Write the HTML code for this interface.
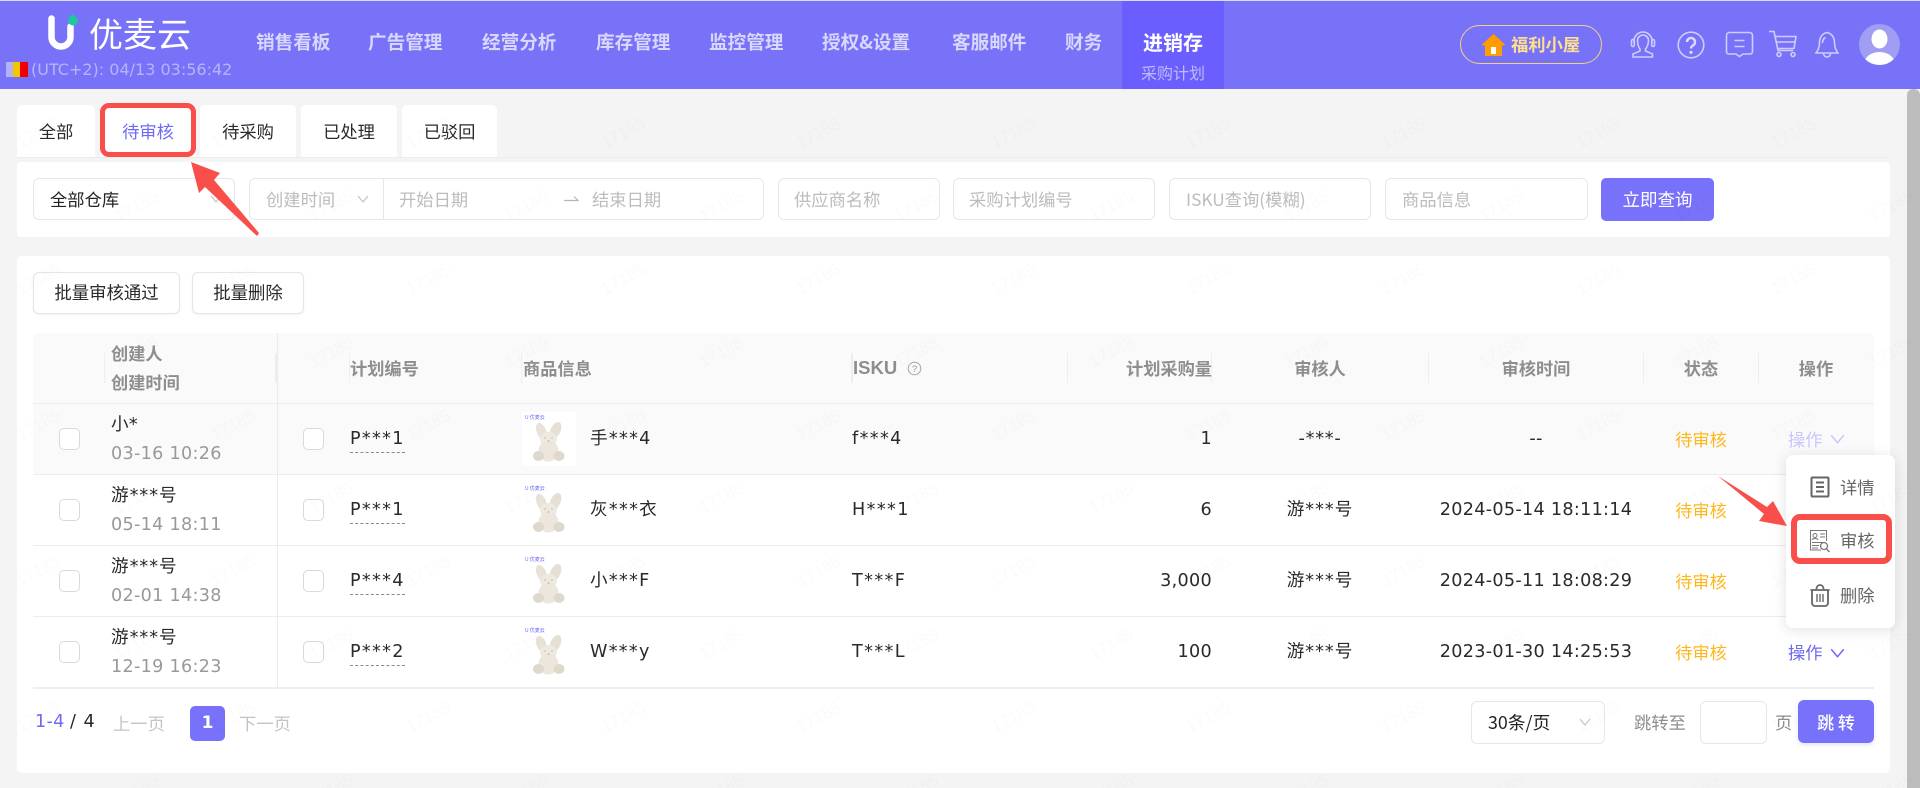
<!DOCTYPE html>
<html lang="zh"><head><meta charset="utf-8"><title>采购计划</title>
<style>
*{box-sizing:border-box}
html,body{margin:0;padding:0;width:1920px;height:788px;overflow:hidden;background:#f4f4f4;font-family:"DejaVu Sans","Noto Sans CJK SC",sans-serif;color:#2a2a2a}
.a{position:absolute}
.t{position:absolute;white-space:nowrap;line-height:24px;height:24px;font-size:17.600px;letter-spacing:.3px}
.c{font-family:"Noto Sans CJK SC",sans-serif;letter-spacing:0;font-size:17.300px}
.r{transform:translateX(-100%)}
.m{transform:translateX(-50%)}
.n{font-family:"Noto Sans CJK SC",sans-serif;font-weight:700;font-size:18.600px;color:#d9d7fc;letter-spacing:0;top:30px}
.tab{position:absolute;top:105px;height:52px;background:#fff;border-radius:5px 5px 0 0;text-align:center;font:17.300px/52px "Noto Sans CJK SC",sans-serif}
.box{position:absolute;background:#fff;border:1px solid #e7e7e7;border-radius:6px;height:42px;top:178px}
.ph{color:#bcbcbc;font-family:"Noto Sans CJK SC",sans-serif;letter-spacing:0;top:187px;font-size:17.300px}
.h{color:#8e8e8e;font-weight:700;font-family:"Noto Sans CJK SC",sans-serif;letter-spacing:0;font-size:17.200px}
.sep{position:absolute;top:353px;height:30px;width:1px;background:#eeeeee}
.line{position:absolute;left:33px;width:1841px;height:1px;background:#ededed}
.cb{position:absolute;background:#fff;border:1px solid #d9d9d9;border-radius:5px;width:21px;height:22px}
.u{position:absolute;left:350px;width:55px;height:0;border-top:1px dashed #8a8a8a}
.st{color:#fdb71e;font-family:"Noto Sans CJK SC",sans-serif;letter-spacing:0;font-size:17.300px}
.g{color:#999}
.btn{position:absolute;background:#fff;border:1px solid #e5e5e5;border-radius:6px;text-align:center;font:17.400px/40px "Noto Sans CJK SC",sans-serif;color:#2a2a2a;box-shadow:0 1px 2px rgba(0,0,0,.05)}
.rb{position:absolute;border:5px solid #f84f4a;border-radius:9px;background:transparent}
</style></head><body>

<svg width="0" height="0" style="position:absolute"><defs>
<symbol id="bun" viewBox="0 0 54 54">
<text x="3" y="7" font-size="5" fill="#6a64f5" font-family="Noto Sans CJK SC,sans-serif">U 优麦云</text>
<ellipse cx="19.500" cy="19.500" rx="4.800" ry="9" fill="#e8e2d8" transform="rotate(-22 19.500 19.500)"/>
<ellipse cx="33.500" cy="18.500" rx="5" ry="9" fill="#e5dfd4" transform="rotate(24 33.500 18.500)"/>
<ellipse cx="26.500" cy="27" rx="8.500" ry="7" fill="#eee9e1"/>
<ellipse cx="26.500" cy="39" rx="10" ry="10.500" fill="#ece6dc"/>
<ellipse cx="16.500" cy="44" rx="5.500" ry="5" fill="#dfd9cd"/>
<ellipse cx="37" cy="44" rx="5.500" ry="5" fill="#dfd9cd"/>
<circle cx="26.500" cy="29" r=".8" fill="#d59a94"/>
<circle cx="23" cy="26" r=".6" fill="#a89c8c"/><circle cx="30" cy="26" r=".6" fill="#a89c8c"/>
</symbol>
<symbol id="chev" viewBox="0 0 12 8"><path d="M1 1l5 6 5-6" fill="none" stroke="currentColor" stroke-width="1.200"/></symbol>
</defs></svg>

<!-- header -->
<div class="a" style="left:0;top:0;width:1920px;height:89px;background:#7772f8;border-top:1px solid #dcdbfb"></div>
<div class="a" style="left:1122px;top:1px;width:102px;height:88px;background:#6a5efe"></div>
<svg class="a" style="left:46px;top:14px" width="34" height="38" viewBox="0 0 34 38"><path d="M5.500 4.500V23a9.500 9.500 0 0 0 19 0V12.500" fill="none" stroke="#fff" stroke-width="6.500" stroke-linecap="round"/><path d="M26.500 0c4 3.500 5.500 5 5.500 6.500a5 5 0 0 1-10 0c0-1.500 1-3 4.500-6.500z" fill="#1fc79f"/></svg>
<div class="t c" style="left:89px;top:14px;height:38px;line-height:38px;font-size:34px;color:#fff">优麦云</div>
<div class="a" style="left:6px;top:62px;width:8px;height:15px;background:#b3b0fc"></div>
<div class="a" style="left:13px;top:62px;width:7px;height:15px;background:#f7c500"></div>
<div class="a" style="left:20px;top:62px;width:8px;height:15px;background:#ee0000"></div>
<div class="t" style="left:31px;top:58px;font-size:16px;letter-spacing:0;color:#b7b4fb">(UTC+2): 04/13 03:56:42</div>
<div class="t n" style="left:256px">销售看板</div>
<div class="t n" style="left:368px">广告管理</div>
<div class="t n" style="left:482px">经营分析</div>
<div class="t n" style="left:596px">库存管理</div>
<div class="t n" style="left:709px">监控管理</div>
<div class="t n" style="left:822px">授权&amp;设置</div>
<div class="t n" style="left:952px">客服邮件</div>
<div class="t n" style="left:1065px">财务</div>
<div class="t n" style="left:1143px;color:#fff;font-size:20px">进销存</div>
<div class="t c" style="left:1141px;top:60px;font-size:16px;color:#bfbbfb">采购计划</div>

<div class="a" style="left:1460px;top:25px;width:142px;height:39px;border:1px solid #f3d183;border-radius:20px"></div>
<svg class="a" style="left:1481px;top:33px" width="25" height="24" viewBox="0 0 25 24"><path d="M12.500 1L1 11.500l1.500 1.500L4 11.700V23h17V11.700l1.500 1.300 1.500-1.500z" fill="#ff9d00"/><rect x="10" y="14" width="5" height="7" fill="#fff"/></svg>
<div class="t c" style="left:1511px;top:32px;font-size:17.300px;font-weight:700;color:#ffe08c">福利小屋</div>

<svg class="a" style="left:1630px;top:31px" width="26" height="27" viewBox="0 0 26 27" fill="none" stroke="#cfcdfc" stroke-width="1.600"><path d="M4 12V10a9 9 0 0 1 18 0v2"/><rect x="1.500" y="8.500" width="2.800" height="7" rx="1.400"/><rect x="21.700" y="8.500" width="2.800" height="7" rx="1.400"/><path d="M7.500 9.500c0-3 2.500-5.500 5.500-5.500s5.500 2.500 5.500 5.500c0 4-2 7.500-3 8.500v2l7 3v3H3v-3l7-3v-2c-1-1-2.500-4.500-2.500-8.500z"/></svg>
<svg class="a" style="left:1677px;top:31px" width="28" height="28" viewBox="0 0 28 28"><circle cx="14" cy="14" r="12.800" fill="none" stroke="#cfcdfc" stroke-width="1.600"/><path d="M10 11a4 4 0 1 1 6.200 3.300c-1.500 1-2.200 1.600-2.200 3.200" fill="none" stroke="#dedcfd" stroke-width="2.400"/><circle cx="14" cy="21.300" r="1.600" fill="#dedcfd"/></svg>
<svg class="a" style="left:1725px;top:31px" width="29" height="27" viewBox="0 0 29 27" fill="none" stroke="#cfcdfc" stroke-width="1.600"><path d="M4 1.500h21a3 3 0 0 1 2.500 3v16a2.500 2.500 0 0 1-2.500 2.500h-7l-3.500 2.500-3.500-2.500H4a2.500 2.500 0 0 1-2.500-2.500v-16A3 3 0 0 1 4 1.500z"/><path d="M9.500 9.500h10M9.500 15.500h10"/></svg>
<svg class="a" style="left:1768px;top:30px" width="30" height="28" viewBox="0 0 30 28" fill="none" stroke="#cfcdfc" stroke-width="1.600"><path d="M1 1.500h5l4 19h15"/><path d="M7 6.500h21l-2 12H10"/><path d="M8.500 12h18.500"/><circle cx="11" cy="24.500" r="2"/><circle cx="25" cy="24.500" r="2"/></svg>
<svg class="a" style="left:1815px;top:31px" width="24" height="28" viewBox="0 0 24 28" fill="none" stroke="#cfcdfc" stroke-width="1.600"><path d="M12 1.500c-5 1-7.500 5.500-7.500 10 0 5-1.500 8-3.500 10.500h22c-2-2.500-3.500-5.500-3.500-10.500 0-4.500-2.500-9-7.500-10z"/><path d="M8.500 22.500a3.500 3.500 0 0 0 7 0"/><path d="M7.500 12c0-2.500 1-4.500 3-5.500"/></svg>
<svg class="a" style="left:1859px;top:24px" width="41" height="41" viewBox="0 0 41 41"><circle cx="20.500" cy="20.500" r="20.500" fill="#a19df2"/><clipPath id="cp"><circle cx="20.500" cy="20.500" r="20.500"/></clipPath><g clip-path="url(#cp)"><ellipse cx="20.500" cy="15" rx="8" ry="9.500" fill="#fff"/><ellipse cx="20.500" cy="39" rx="15" ry="11" fill="#fff"/></g></svg>

<!-- scrollbar -->
<div class="a" style="left:1907px;top:89px;width:13px;height:699px;background:#bdbdbd;border-radius:6px 6px 0 0"></div>

<!-- tabs -->
<div class="tab" style="left:17px;width:78px">全部</div>
<div class="tab" style="left:100px;width:96px;color:#6f69f5">待审核</div>
<div class="tab" style="left:200px;width:96px">待采购</div>
<div class="tab" style="left:301px;width:96px">已处理</div>
<div class="tab" style="left:402px;width:95px">已驳回</div>
<div class="a" style="left:17px;top:157px;width:1873px;height:1px;background:#ececec"></div>

<!-- filter -->
<div class="a" style="left:17px;top:162px;width:1873px;height:75px;background:#fff;border-radius:4px"></div>
<div class="box" style="left:33px;width:202px"></div>
<div class="t c" style="left:50px;top:187px;color:#222">全部仓库</div>
<svg class="a" style="left:210px;top:195px;color:#c4c4c4" width="12" height="8"><use href="#chev"/></svg>
<div class="box" style="left:249px;width:515px"></div>
<div class="a" style="left:383px;top:178px;width:1px;height:42px;background:#e7e7e7"></div>
<div class="t ph" style="left:266px">创建时间</div>
<svg class="a" style="left:357px;top:195px;color:#c4c4c4" width="12" height="8"><use href="#chev"/></svg>
<div class="t ph" style="left:399px">开始日期</div>
<svg class="a" style="left:564px;top:194px" width="15" height="9" viewBox="0 0 15 9" fill="none" stroke="#b5b5b5" stroke-width="1.200"><path d="M0 6.500h14L10 2.500"/></svg>
<div class="t ph" style="left:592px">结束日期</div>
<div class="box" style="left:778px;width:162px"></div><div class="t ph" style="left:794px">供应商名称</div>
<div class="box" style="left:953px;width:202px"></div><div class="t ph" style="left:969px">采购计划编号</div>
<div class="box" style="left:1169px;width:202px"></div><div class="t ph" style="left:1186px">ISKU查询(模糊)</div>
<div class="box" style="left:1385px;width:203px"></div><div class="t ph" style="left:1402px">商品信息</div>
<div class="a" style="left:1601px;top:178px;width:113px;height:43px;background:#7871fa;border-radius:5px;color:#fff;text-align:center;font:17.500px/44px 'Noto Sans CJK SC',sans-serif">立即查询</div>

<!-- main -->
<div class="a" style="left:17px;top:256px;width:1873px;height:517px;background:#fff;border-radius:5px"></div>
<div class="btn" style="left:33px;top:272px;width:147px;height:42px">批量审核通过</div>
<div class="btn" style="left:192px;top:272px;width:112px;height:42px">批量删除</div>

<div class="a" style="left:33px;top:333px;width:1841px;height:70px;background:#fafafa;border-radius:5px 5px 0 0"></div>
<div class="a" style="left:33px;top:403px;width:1841px;height:71px;background:#fafafa"></div>
<div class="line" style="top:403px"></div><div class="line" style="top:474px"></div><div class="line" style="top:545px"></div><div class="line" style="top:616px"></div>
<div class="a" style="left:33px;top:687px;width:1841px;height:2px;background:#eeeeee"></div>
<div class="a" style="left:277px;top:333px;width:1px;height:354px;background:#ebebeb"></div>

<div class="sep" style="left:104px"></div><div class="sep" style="left:275px;width:2px"></div><div class="sep" style="left:349px"></div><div class="sep" style="left:521px"></div><div class="sep" style="left:851px;width:2px"></div><div class="sep" style="left:1067px"></div><div class="sep" style="left:1211px"></div><div class="sep" style="left:1428px"></div><div class="sep" style="left:1643px"></div><div class="sep" style="left:1758px"></div>

<div class="t h" style="left:111px;top:341px">创建人</div>
<div class="t h" style="left:111px;top:370px">创建时间</div>
<div class="t h" style="left:350px;top:356px">计划编号</div>
<div class="t h" style="left:523px;top:356px">商品信息</div>
<div class="t h" style="left:853px;top:356px;font-family:'Liberation Sans',sans-serif;font-size:18.500px">ISKU</div>
<svg class="a" style="left:907px;top:361px" width="15" height="15" viewBox="0 0 15 15"><circle cx="7.500" cy="7.500" r="6.300" fill="none" stroke="#a0a4b4" stroke-width="1"/><text x="7.500" y="11" font-size="9.500" text-anchor="middle" fill="#8f93a5" font-family="Liberation Sans,sans-serif">?</text></svg>
<div class="t h r" style="left:1212px;top:356px">计划采购量</div>
<div class="t h m" style="left:1320px;top:356px">审核人</div>
<div class="t h m" style="left:1536px;top:356px">审核时间</div>
<div class="t h m" style="left:1701px;top:356px">状态</div>
<div class="t h m" style="left:1816px;top:356px">操作</div>

<!-- row 1 -->
<div class="cb" style="left:59px;top:428px"></div><div class="cb" style="left:303px;top:428px"></div>
<div class="t" style="left:111px;top:413px">小*</div><div class="t g" style="left:111px;top:442px">03-16 10:26</div>
<div class="t" style="left:350px;top:427px;letter-spacing:1.300px">P***1</div><div class="u" style="top:452px"></div>
<svg class="a" style="left:522px;top:412px;background:#fff" width="54" height="54"><use href="#bun"/></svg>
<div class="t" style="left:590px;top:427px;letter-spacing:1.300px">手***4</div>
<div class="t" style="left:852px;top:427px;letter-spacing:1.400px">f***4</div>
<div class="t r" style="left:1212px;top:427px">1</div>
<div class="t m" style="left:1320px;top:427px;letter-spacing:.8px">-***-</div>
<div class="t m" style="left:1536px;top:427px">--</div>
<div class="t st m" style="left:1701px;top:427px">待审核</div>
<div class="t c" style="left:1788px;top:427px;color:#c9c6fc">操作</div>
<svg class="a" style="left:1830px;top:434px;color:#c9c6fc" width="15" height="10"><use href="#chev"/></svg>

<!-- row 2 -->
<div class="cb" style="left:59px;top:499px"></div><div class="cb" style="left:303px;top:499px"></div>
<div class="t" style="left:111px;top:484px;letter-spacing:1px">游***号</div><div class="t g" style="left:111px;top:513px">05-14 18:11</div>
<div class="t" style="left:350px;top:498px;letter-spacing:1.300px">P***1</div><div class="u" style="top:523px"></div>
<svg class="a" style="left:522px;top:483px" width="54" height="54"><use href="#bun"/></svg>
<div class="t" style="left:590px;top:498px;letter-spacing:1.300px">灰***衣</div>
<div class="t" style="left:852px;top:498px;letter-spacing:1.400px">H***1</div>
<div class="t r" style="left:1212px;top:498px">6</div>
<div class="t m" style="left:1320px;top:498px;letter-spacing:1px">游***号</div>
<div class="t m" style="left:1536px;top:498px">2024-05-14 18:11:14</div>
<div class="t st m" style="left:1701px;top:498px">待审核</div>

<!-- row 3 -->
<div class="cb" style="left:59px;top:570px"></div><div class="cb" style="left:303px;top:570px"></div>
<div class="t" style="left:111px;top:555px;letter-spacing:1px">游***号</div><div class="t g" style="left:111px;top:584px">02-01 14:38</div>
<div class="t" style="left:350px;top:569px;letter-spacing:1.300px">P***4</div><div class="u" style="top:594px"></div>
<svg class="a" style="left:522px;top:554px" width="54" height="54"><use href="#bun"/></svg>
<div class="t" style="left:590px;top:569px;letter-spacing:1.300px">小***F</div>
<div class="t" style="left:852px;top:569px;letter-spacing:1.400px">T***F</div>
<div class="t r" style="left:1212px;top:569px">3,000</div>
<div class="t m" style="left:1320px;top:569px;letter-spacing:1px">游***号</div>
<div class="t m" style="left:1536px;top:569px">2024-05-11 18:08:29</div>
<div class="t st m" style="left:1701px;top:569px">待审核</div>

<!-- row 4 -->
<div class="cb" style="left:59px;top:641px"></div><div class="cb" style="left:303px;top:641px"></div>
<div class="t" style="left:111px;top:626px;letter-spacing:1px">游***号</div><div class="t g" style="left:111px;top:655px">12-19 16:23</div>
<div class="t" style="left:350px;top:640px;letter-spacing:1.300px">P***2</div><div class="u" style="top:665px"></div>
<svg class="a" style="left:522px;top:625px" width="54" height="54"><use href="#bun"/></svg>
<div class="t" style="left:590px;top:640px;letter-spacing:1.300px">W***y</div>
<div class="t" style="left:852px;top:640px;letter-spacing:1.400px">T***L</div>
<div class="t r" style="left:1212px;top:640px">100</div>
<div class="t m" style="left:1320px;top:640px;letter-spacing:1px">游***号</div>
<div class="t m" style="left:1536px;top:640px">2023-01-30 14:25:53</div>
<div class="t st m" style="left:1701px;top:640px">待审核</div>
<div class="t c" style="left:1788px;top:640px;color:#6f69f5">操作</div>
<svg class="a" style="left:1830px;top:648px;color:#6f69f5" width="15" height="10"><use href="#chev"/></svg>

<!-- pagination -->
<div class="t" style="left:35px;top:710px;color:#6f69f5;letter-spacing:.3px">1-4</div>
<div class="t" style="left:70px;top:710px;letter-spacing:1px">/ 4</div>
<div class="t c" style="left:113px;top:711px;color:#c4c4c4">上一页</div>
<div class="a" style="left:190px;top:706px;width:35px;height:35px;background:#7871fa;border-radius:5px;color:#fff;text-align:center;font:700 17px/35px 'DejaVu Sans',sans-serif">1</div>
<div class="t c" style="left:239px;top:711px;color:#c4c4c4">下一页</div>
<div class="box" style="left:1471px;top:701px;width:134px;height:43px"></div>
<div class="t c" style="left:1488px;top:710px;color:#222;font-size:17.800px">30条/页</div>
<svg class="a" style="left:1579px;top:718px;color:#c4c4c4" width="12" height="8"><use href="#chev"/></svg>
<div class="t c" style="left:1634px;top:710px;color:#8e8e8e">跳转至</div>
<div class="box" style="left:1700px;top:701px;width:67px;height:43px"></div>
<div class="t c" style="left:1775px;top:710px;color:#8e8e8e">页</div>
<div class="a" style="left:1798px;top:700px;width:76px;height:43px;background:#7871fa;border-radius:6px;color:#fff;text-align:center;font:500 17px/43px 'Noto Sans CJK SC',sans-serif;box-shadow:0 2px 4px rgba(120,113,250,.2)">跳 转</div>

<!-- dropdown -->
<div class="a" style="left:1786px;top:455px;width:109px;height:173px;background:#fff;border-radius:7px;box-shadow:0 2px 14px rgba(0,0,0,.12)"></div>
<svg class="a" style="left:1810px;top:476px" width="20" height="22" viewBox="0 0 20 22" fill="none" stroke="#666" stroke-width="2"><rect x="1.500" y="1.500" width="17" height="19" rx="1"/><path d="M6 6.500h8M6 11h8M6 15.500h8"/></svg>
<div class="t c" style="left:1840px;top:475px;color:#666">详情</div>
<svg class="a" style="left:1809px;top:529px" width="22" height="24" viewBox="0 0 22 24" fill="none" stroke="#777" stroke-width="1"><path d="M12 21H1.500V1.500h16V12"/><circle cx="6" cy="6.500" r="2"/><path d="M3 11c0-2 6-2 6 0M11 5h5M11 8h5M3 13.500h13M3 16.500h7M3 19h6"/><circle cx="15" cy="17" r="3.500" stroke-width="1.300"/><path d="M17.500 20l3 3" stroke-width="1.300"/></svg>
<div class="t c" style="left:1840px;top:528px;color:#666">审核</div>
<svg class="a" style="left:1810px;top:584px" width="20" height="23" viewBox="0 0 20 23" fill="none" stroke="#666" stroke-width="1.800"><path d="M.5 6h19M6.500 5c0-2.500 1.500-4 3.500-4s3.500 1.500 3.500 4"/><path d="M2 6v13a3 3 0 0 0 3 3h10a3 3 0 0 0 3-3V6"/><path d="M7 10v8M10 10v8M13 10v8" stroke-width="1.400"/></svg>
<div class="t c" style="left:1840px;top:583px;color:#666">删除</div>

<!-- watermark -->
<svg class="a" style="left:0;top:89px;pointer-events:none" width="1920" height="699"><defs><pattern id="wm" width="195" height="146" patternUnits="userSpaceOnUse"><text transform="translate(20 60) rotate(-28)" font-size="17" fill="#000" fill-opacity=".016" font-family="Liberation Sans,sans-serif">17185</text><text transform="translate(118 133) rotate(-28)" font-size="17" fill="#000" fill-opacity=".016" font-family="Liberation Sans,sans-serif">17185</text></pattern></defs><rect width="1920" height="699" fill="url(#wm)"/></svg>

<!-- annotations -->
<div class="rb" style="left:100px;top:103px;width:96px;height:54px"></div>
<div class="rb" style="left:1791px;top:514px;width:101px;height:50px;border-width:6px"></div>
<svg class="a" style="left:0;top:0;pointer-events:none" width="1920" height="788"><polygon points="191,162 220,173 214,180 259,233 257,236 205,187 199,193" fill="#f84f4a"/><polygon points="1718,476 1767,507 1773,501 1787,526 1759,521 1764,514" fill="#f84f4a"/></svg>
</body></html>
